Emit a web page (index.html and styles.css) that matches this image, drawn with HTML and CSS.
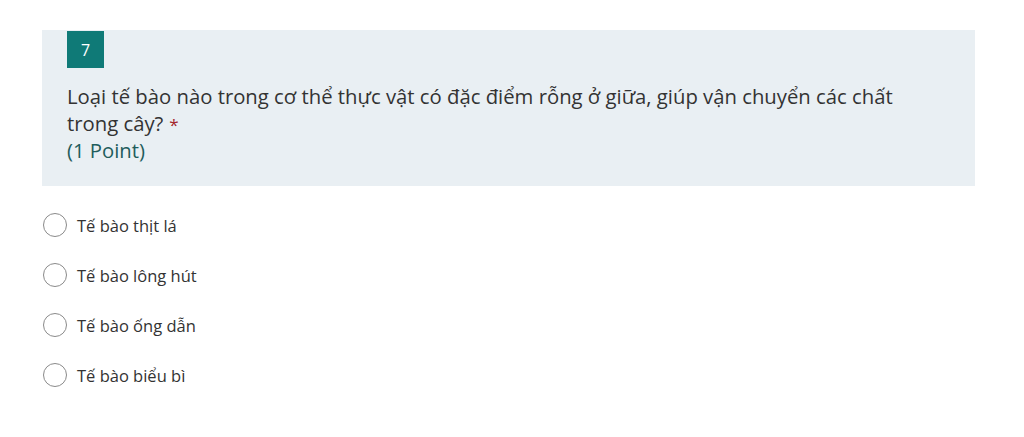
FILE: index.html
```html
<!DOCTYPE html>
<html lang="vi">
<head>
<meta charset="utf-8">
<link rel="stylesheet" href="styles.css">
</head>
<body>
<div class="question">
  <div class="panel">
    <div class="badge">7</div>
    <div class="title">Loại tế bào nào trong cơ thể thực vật có đặc điểm rỗng ở giữa, giúp vận chuyển các chất trong cây?<span class="req">*</span></div>
    <div class="points">(1 Point)</div>
  </div>
  <div class="options">
    <label class="option"><span class="radio"></span><span class="opt-text">Tế bào thịt lá</span></label>
    <label class="option"><span class="radio"></span><span class="opt-text">Tế bào lông hút</span></label>
    <label class="option"><span class="radio"></span><span class="opt-text">Tế bào ống dẫn</span></label>
    <label class="option"><span class="radio"></span><span class="opt-text">Tế bào biểu bì</span></label>
  </div>
</div>
</body>
</html>
```
FILE: styles.css
```css
html, body {
  margin: 0;
  padding: 0;
  background: #ffffff;
}
body {
  font-family: "Open Sans", "Noto Sans", sans-serif;
  color: #333333;
}
.question {
  padding: 30px 0 0 42px;
  width: 933px;
}
.panel {
  background: #e9eff3;
  padding: 1px 60px 22px 25px;
}
.badge {
  width: 37px;
  height: 37px;
  background: #0f7a77;
  color: #ffffff;
  font-size: 16px;
  display: flex;
  align-items: center;
  justify-content: center;
  margin-bottom: 15px;
}
.title, .points {
  font-size: 20.3px;
  line-height: 27px;
  color: #333333;
}
.points {
  color: #1f5d5c;
}
.req {
  color: #a4262c;
  font-size: 17px;
  line-height: 1;
  margin-left: 6px;
}
.options {
  padding-top: 14px;
  display: flex;
  flex-direction: column;
}
.option {
  display: flex;
  align-items: center;
  height: 50px;
  gap: 10px;
}
.radio {
  width: 24px;
  height: 24px;
  border: 1px solid #8a8a8a;
  border-radius: 50%;
  box-sizing: border-box;
  margin-left: 1px;
}
.opt-text {
  font-size: 16.5px;
  color: #333333;
}
```
